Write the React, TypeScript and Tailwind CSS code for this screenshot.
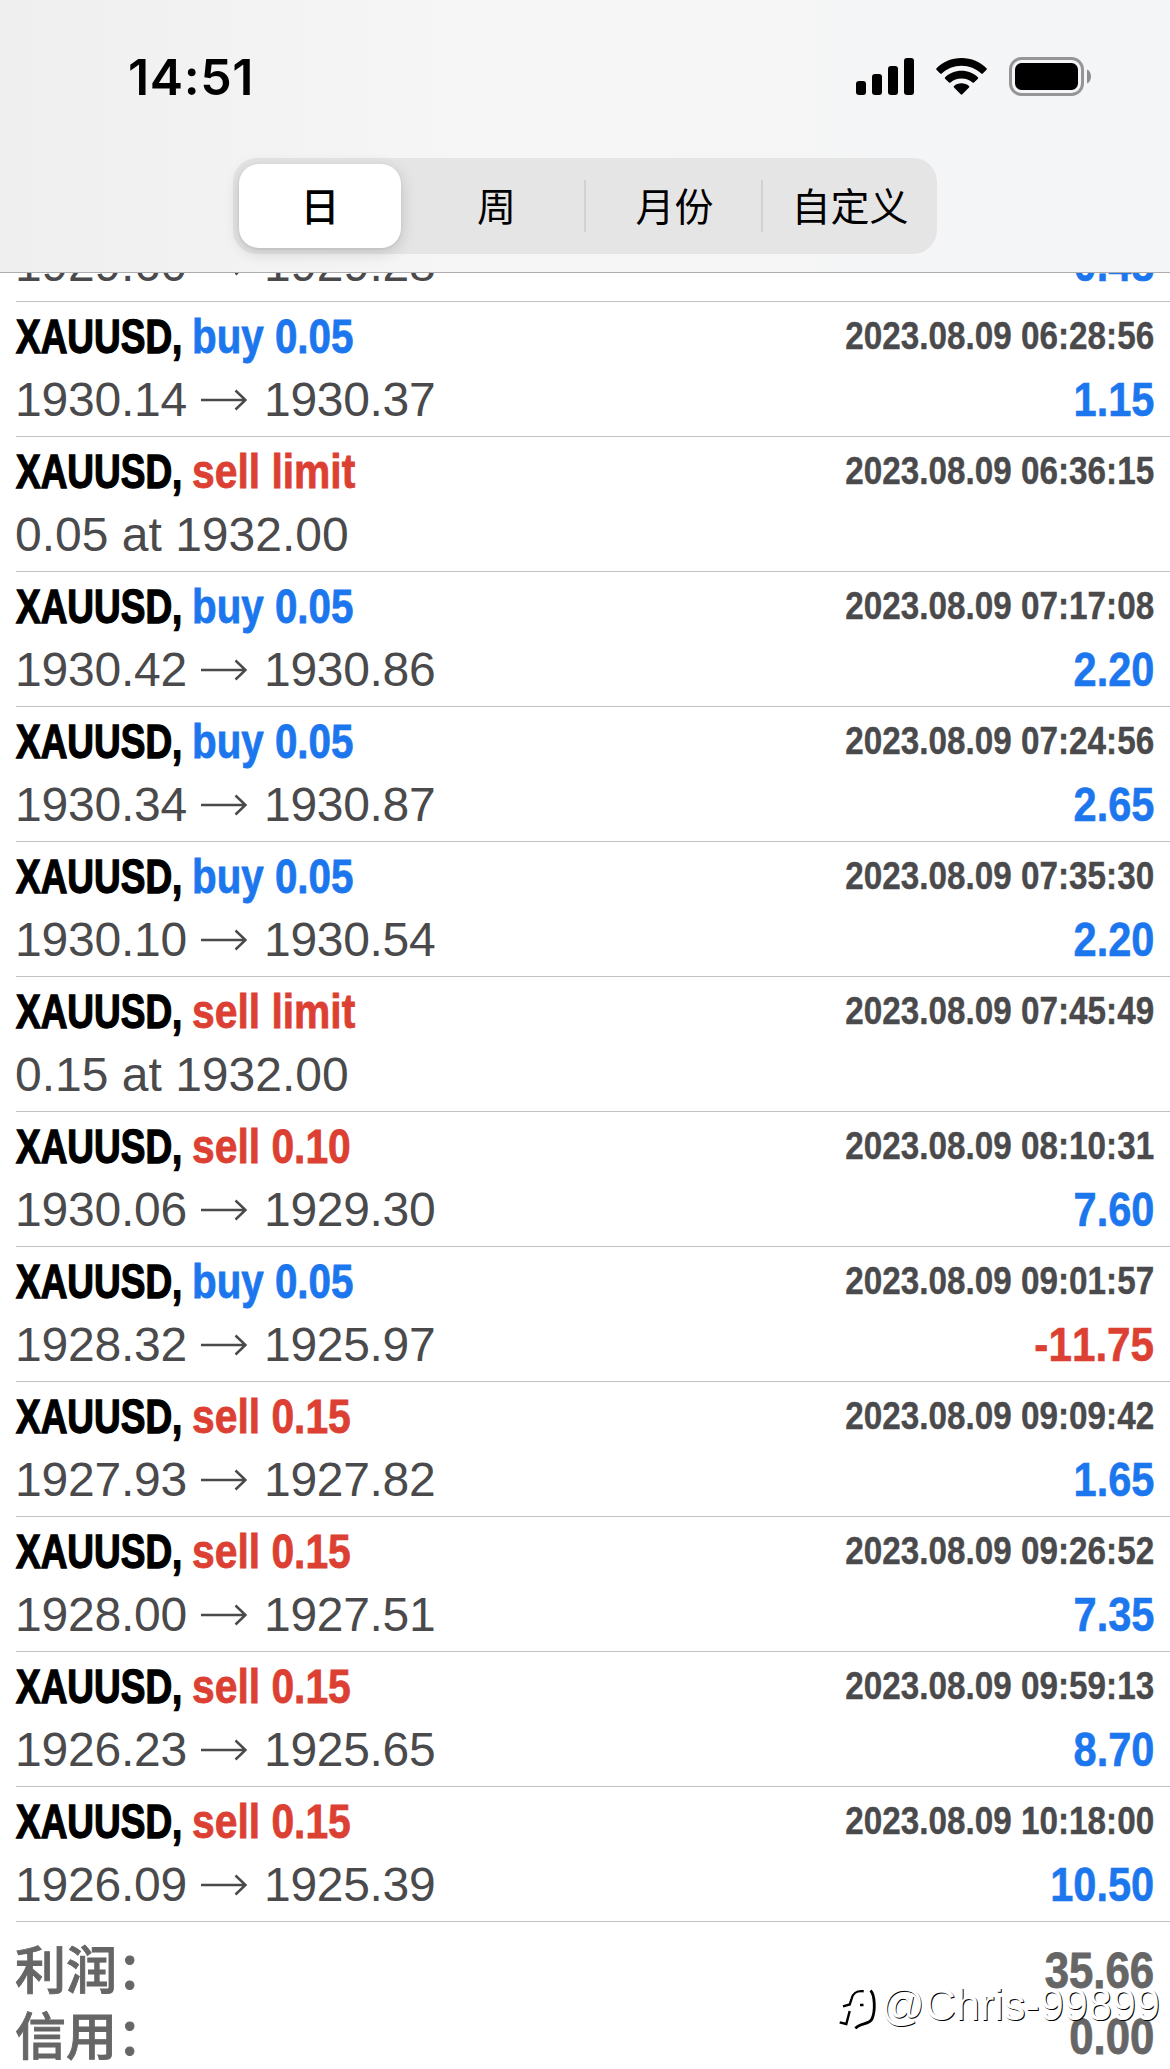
type Deal = {
  action: string;
  side: "buy" | "sell";
  time: string;
  from?: string;
  to?: string;
  note?: string;
  profit?: string;
};

const deals: Deal[] = [
  { action: "buy 0.05", side: "buy", time: "2023.08.09 06:20:11", from: "1929.60", to: "1929.28", profit: "0.48" },
  { action: "buy 0.05", side: "buy", time: "2023.08.09 06:28:56", from: "1930.14", to: "1930.37", profit: "1.15" },
  { action: "sell limit", side: "sell", time: "2023.08.09 06:36:15", note: "0.05 at 1932.00" },
  { action: "buy 0.05", side: "buy", time: "2023.08.09 07:17:08", from: "1930.42", to: "1930.86", profit: "2.20" },
  { action: "buy 0.05", side: "buy", time: "2023.08.09 07:24:56", from: "1930.34", to: "1930.87", profit: "2.65" },
  { action: "buy 0.05", side: "buy", time: "2023.08.09 07:35:30", from: "1930.10", to: "1930.54", profit: "2.20" },
  { action: "sell limit", side: "sell", time: "2023.08.09 07:45:49", note: "0.15 at 1932.00" },
  { action: "sell 0.10", side: "sell", time: "2023.08.09 08:10:31", from: "1930.06", to: "1929.30", profit: "7.60" },
  { action: "buy 0.05", side: "buy", time: "2023.08.09 09:01:57", from: "1928.32", to: "1925.97", profit: "-11.75" },
  { action: "sell 0.15", side: "sell", time: "2023.08.09 09:09:42", from: "1927.93", to: "1927.82", profit: "1.65" },
  { action: "sell 0.15", side: "sell", time: "2023.08.09 09:26:52", from: "1928.00", to: "1927.51", profit: "7.35" },
  { action: "sell 0.15", side: "sell", time: "2023.08.09 09:59:13", from: "1926.23", to: "1925.65", profit: "8.70" },
  { action: "sell 0.15", side: "sell", time: "2023.08.09 10:18:00", from: "1926.09", to: "1925.39", profit: "10.50" },
];

const totals = [
  { label: "利润：", value: "35.66" },
  { label: "信用：", value: "0.00" },
];

const StatusBar = function () {
  return (
    <div className="flex h-[158px] items-start justify-between pt-[47px] pr-[79px] pl-[128px]">
      <span className="font-[Inter,sans-serif] text-[50px] leading-[60px] font-semibold tracking-[0.6px] text-black">
        14:51
      </span>
      <div className="mt-[10px] flex items-center">
        <svg width="58" height="37" viewBox="0 0 58 37" className="mr-[22px]">
          <rect x="0" y="23" width="10" height="14" rx="3" />
          <rect x="16" y="16" width="10" height="21" rx="3" />
          <rect x="32" y="8" width="10" height="29" rx="3" />
          <rect x="48" y="0" width="10" height="37" rx="3" />
        </svg>
        <svg width="51" height="37" viewBox="0 0 51 37" className="mr-[22px]">
          <path d="M25.5 0C35.500 0 44.300 3.800 50.500 10.200Q51.200 11 50.500 11.700L46.800 15.500Q46 16.200 45.200 15.500C40 10.600 33.100 7.700 25.500 7.700S11 10.600 5.800 15.500Q5 16.200 4.200 15.500L.500 11.700Q-.200 11 .5 10.200C6.700 3.800 15.500 0 25.500 0Z" />
          <path d="M25.500 12.800C31.900 12.800 37.700 15.300 41.900 19.300Q42.600 20 41.900 20.700L38 24.500Q37.300 25.200 36.500 24.500C33.600 21.900 29.700 20.400 25.500 20.400S17.400 21.900 14.500 24.500Q13.700 25.200 13 24.500L9.100 20.700Q8.400 20 9.100 19.300C13.300 15.300 19.100 12.800 25.500 12.800Z" />
          <path d="M25.500 25.300C28.400 25.300 31.100 26.300 33 28.100Q33.700 28.800 33 29.500L26.300 36.300Q25.500 37 24.700 36.300L18 29.500Q17.300 28.800 18 28.100C19.900 26.300 22.600 25.300 25.500 25.300Z" />
        </svg>
        <svg width="82" height="39" viewBox="0 0 82 39">
          <rect x="1.500" y="1.500" width="72" height="36" rx="11" fill="none" stroke="#959597" strokeWidth="3" />
          <rect x="6" y="6" width="63" height="27" rx="6.500" />
          <path d="M78 12.500C80.600 13.600 82 16.200 82 19.500S80.600 25.400 78 26.500Z" fill="#8e8e90" />
        </svg>
      </div>
    </div>
  );
};

const PeriodTabs = function () {
  return (
    <div className="mx-auto flex h-24 w-[704px] items-center rounded-[24px] bg-[#e5e5e6] p-[6px] font-['Noto_Sans_CJK_SC',sans-serif] text-[39px] leading-none text-black">
      <div className="flex h-[84px] w-[162px] items-center justify-center rounded-[20px] bg-white pb-[4px] font-medium shadow-[0_4px_16px_rgba(0,0,0,0.16),0_1px_3px_rgba(0,0,0,0.08)]">
        日
      </div>
      <div className="flex h-[52px] w-[185px] items-center justify-center border-r-2 border-[#d1d1d3] pb-[4px] pl-2">周</div>
      <div className="flex h-[52px] w-[177px] items-center justify-center border-r-2 border-[#d1d1d3] pb-[4px] pl-0.5">月份</div>
      <div className="flex flex-1 items-center justify-center pb-[4px] pl-1.5">自定义</div>
    </div>
  );
};

const Arrow = function () {
  return (
    <svg width="46" height="22" viewBox="0 0 46 22" fill="none" stroke="#4a4a4c" strokeWidth="2.500" className="mr-[17px] ml-[14px]">
      <path d="M0 11H44M34.500 1.500L44.500 11L34.500 20.500" />
    </svg>
  );
};

const DealRow = function ({ deal }: { deal: Deal }) {
  return (
    <div className="ml-4 h-[135px] border-b border-[#c2c2c5] pt-[3px] pr-4">
      <div className="flex justify-between font-bold whitespace-nowrap">
        <div className="flex text-[48px] leading-[63px]">
          <span className="w-[176px] origin-left scale-x-[0.77] text-black [-webkit-text-stroke:1.400px]">XAUUSD,</span>
          <span
            className={
              deal.side === "buy"
                ? "origin-left scale-x-[0.84] text-[#1c76ee] [-webkit-text-stroke:0.800px]"
                : "origin-left scale-x-[0.85] text-[#dc4033] [-webkit-text-stroke:0.800px]"
            }
          >
            {deal.action}
          </span>
        </div>
        <span className="origin-right scale-x-[0.853] text-[39px] leading-[61px] text-[#4a4a4c] [-webkit-text-stroke:0.400px]">
          {deal.time}
        </span>
      </div>
      <div className="flex justify-between text-[48px] leading-[63px] whitespace-nowrap">
        {deal.note ? (
          <span className="-ml-[1px] text-[#4a4a4c]">{deal.note}</span>
        ) : (
          <div className="-ml-[1px] flex items-center text-[#4a4a4c]">
            <span className="w-[172px] tracking-[-0.2px]">{deal.from}</span>
            <Arrow />
            <span className="tracking-[-0.3px]">{deal.to}</span>
          </div>
        )}
        {deal.profit && (
          <span
            className={
              deal.profit.startsWith("-")
                ? "origin-right scale-x-[0.88] font-bold text-[#dc4033] [font-kerning:none] [-webkit-text-stroke:0.600px]"
                : "origin-right scale-x-[0.865] font-bold text-[#1c76ee] [font-kerning:none] [-webkit-text-stroke:0.600px]"
            }
          >
            {deal.profit}
          </span>
        )}
      </div>
    </div>
  );
};

const Watermark = function () {
  return (
    <div className="absolute right-[10px] bottom-[38px] flex items-center text-white">
      <svg width="40" height="42" viewBox="0 0 40 42" fill="none" stroke="#000" className="mt-[10px] -mr-[9px]">
        <path d="M25.700 2.300C18 1.500 15 4 13.500 10L11.700 15.500L5 17.300" strokeWidth="2.400" />
        <path d="M11.700 22L8.300 35L1.700 33.300M22 16H25.500" strokeWidth="2.400" />
        <path d="M32.500 1.500C37 6 37.500 22 34 30C30.500 36.500 22 33 17.500 39.500" strokeWidth="2.800" />
      </svg>
      <span className="origin-right scale-x-[0.96] text-[45px] leading-[52px] [text-shadow:1px_1px_0.300px_#000]">
        @Chris-99899
      </span>
    </div>
  );
};

const App = function () {
  return (
    <div className="relative h-[2069px] w-[1170px] overflow-hidden bg-white font-['Liberation_Sans',Arial,sans-serif]">
      <header className="h-[273px] border-b border-[#adadaf] bg-linear-to-r from-[#efefef] via-[#f6f6f6] via-40% to-[#f4f5f7]">
        <StatusBar />
        <PeriodTabs />
      </header>
      <main className="overflow-hidden">
        {/* the list is scrolled, its first row sits partly under the header */}
        <div className="-mt-[106px]">
          {deals.map((deal) => (
            <DealRow key={deal.time} deal={deal} />
          ))}
        </div>
        <div className="px-4 pt-[15px]">
          {totals.map(({ label, value }) => (
            <div key={label} className="flex h-[66px] items-start justify-between text-[#666]">
              <span className="-mt-[3px] -ml-[1px] font-['Noto_Sans_CJK_SC',sans-serif] text-[51px] leading-[66px] font-medium [-webkit-text-stroke:0.900px]">
                {label}
              </span>
              <span className="mt-[1px] origin-right scale-x-[0.875] text-[50px] leading-[66px] font-bold [-webkit-text-stroke:0.800px]">
                {value}
              </span>
            </div>
          ))}
        </div>
      </main>
      <Watermark />
    </div>
  );
};

export default App;
